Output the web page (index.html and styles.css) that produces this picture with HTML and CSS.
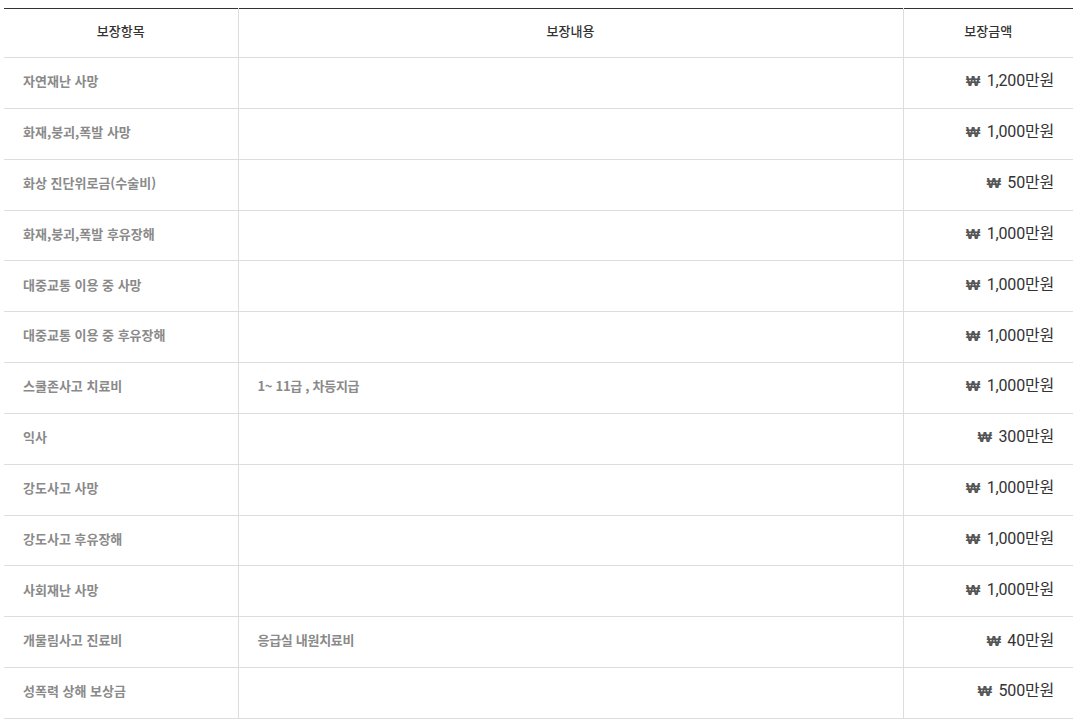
FILE: index.html
```html
<!DOCTYPE html>
<html lang="ko">
<head>
<meta charset="utf-8">
<link rel="stylesheet" href="styles.css">
</head>
<body>
<div class="wrap">
<table class="cov">
<colgroup><col class="c1"><col class="c2"><col class="c3"></colgroup>
<thead>
<tr><th>보장항목</th><th>보장내용</th><th>보장금액</th></tr>
</thead>
<tbody>
<tr><td class="name">자연재난 사망</td><td class="desc"></td><td class="amt"><span class="won">₩</span> 1,200만원</td></tr>
<tr><td class="name">화재,붕괴,폭발 사망</td><td class="desc"></td><td class="amt"><span class="won">₩</span> 1,000만원</td></tr>
<tr><td class="name">화상 진단위로금(수술비)</td><td class="desc"></td><td class="amt"><span class="won">₩</span> 50만원</td></tr>
<tr><td class="name">화재,붕괴,폭발 후유장해</td><td class="desc"></td><td class="amt"><span class="won">₩</span> 1,000만원</td></tr>
<tr><td class="name">대중교통 이용 중 사망</td><td class="desc"></td><td class="amt"><span class="won">₩</span> 1,000만원</td></tr>
<tr><td class="name">대중교통 이용 중 후유장해</td><td class="desc"></td><td class="amt"><span class="won">₩</span> 1,000만원</td></tr>
<tr><td class="name">스쿨존사고 치료비</td><td class="desc">1~ 11급 , 차등지급</td><td class="amt"><span class="won">₩</span> 1,000만원</td></tr>
<tr><td class="name">익사</td><td class="desc"></td><td class="amt"><span class="won">₩</span> 300만원</td></tr>
<tr><td class="name">강도사고 사망</td><td class="desc"></td><td class="amt"><span class="won">₩</span> 1,000만원</td></tr>
<tr><td class="name">강도사고 후유장해</td><td class="desc"></td><td class="amt"><span class="won">₩</span> 1,000만원</td></tr>
<tr><td class="name">사회재난 사망</td><td class="desc"></td><td class="amt"><span class="won">₩</span> 1,000만원</td></tr>
<tr><td class="name">개물림사고 진료비</td><td class="desc">응급실 내원치료비</td><td class="amt"><span class="won">₩</span> 40만원</td></tr>
<tr><td class="name">성폭력 상해 보상금</td><td class="desc"></td><td class="amt"><span class="won">₩</span> 500만원</td></tr>
</tbody>
</table>
</div>
</body>
</html>
```
FILE: styles.css
```css
html, body {
  margin: 0;
  padding: 0;
  background: #fff;
}
body {
  font-family: "Noto Sans CJK KR", "Noto Sans", sans-serif;
}
.wrap {
  padding: 8px 6px 0 4px;
}
.cov {
  width: 1069px;
  border-collapse: collapse;
  table-layout: fixed;
  border-top: 1px solid #333;
}
.c1 { width: 234px; }
.c2 { width: 665px; }
.c3 { width: 170px; }
.cov th {
  height: 44px;
  padding: 0 0 4px;
  font-size: 13px;
  font-weight: 500;
  color: #333;
  text-align: center;
  line-height: 1.2;
  border-bottom: 1px solid #ddd;
  border-left: 1px solid #ddd;
}
.cov td {
  height: 45.85px;
  padding: 0 19px 4px;
  font-size: 13px;
  font-weight: 700;
  color: #8a8a8a;
  line-height: 1.2;
  border-bottom: 1px solid #ddd;
  border-left: 1px solid #ddd;
  vertical-align: middle;
}
.cov td.desc {
  letter-spacing: -0.3px;
}
.cov th:first-child, .cov td:first-child { border-left: none; }
.cov td.amt {
  text-align: right;
  color: #333;
  font-family: Roboto, "Noto Sans CJK KR", sans-serif;
  font-size: 16px;
  font-weight: 400;
  padding-right: 19px;
  letter-spacing: -0.2px;
}
.won {
  color: #555;
  font-family: "Liberation Sans", "Noto Sans CJK KR", sans-serif;
  font-weight: 700;
  font-size: 15px;
  margin-right: 3px;
}
```
